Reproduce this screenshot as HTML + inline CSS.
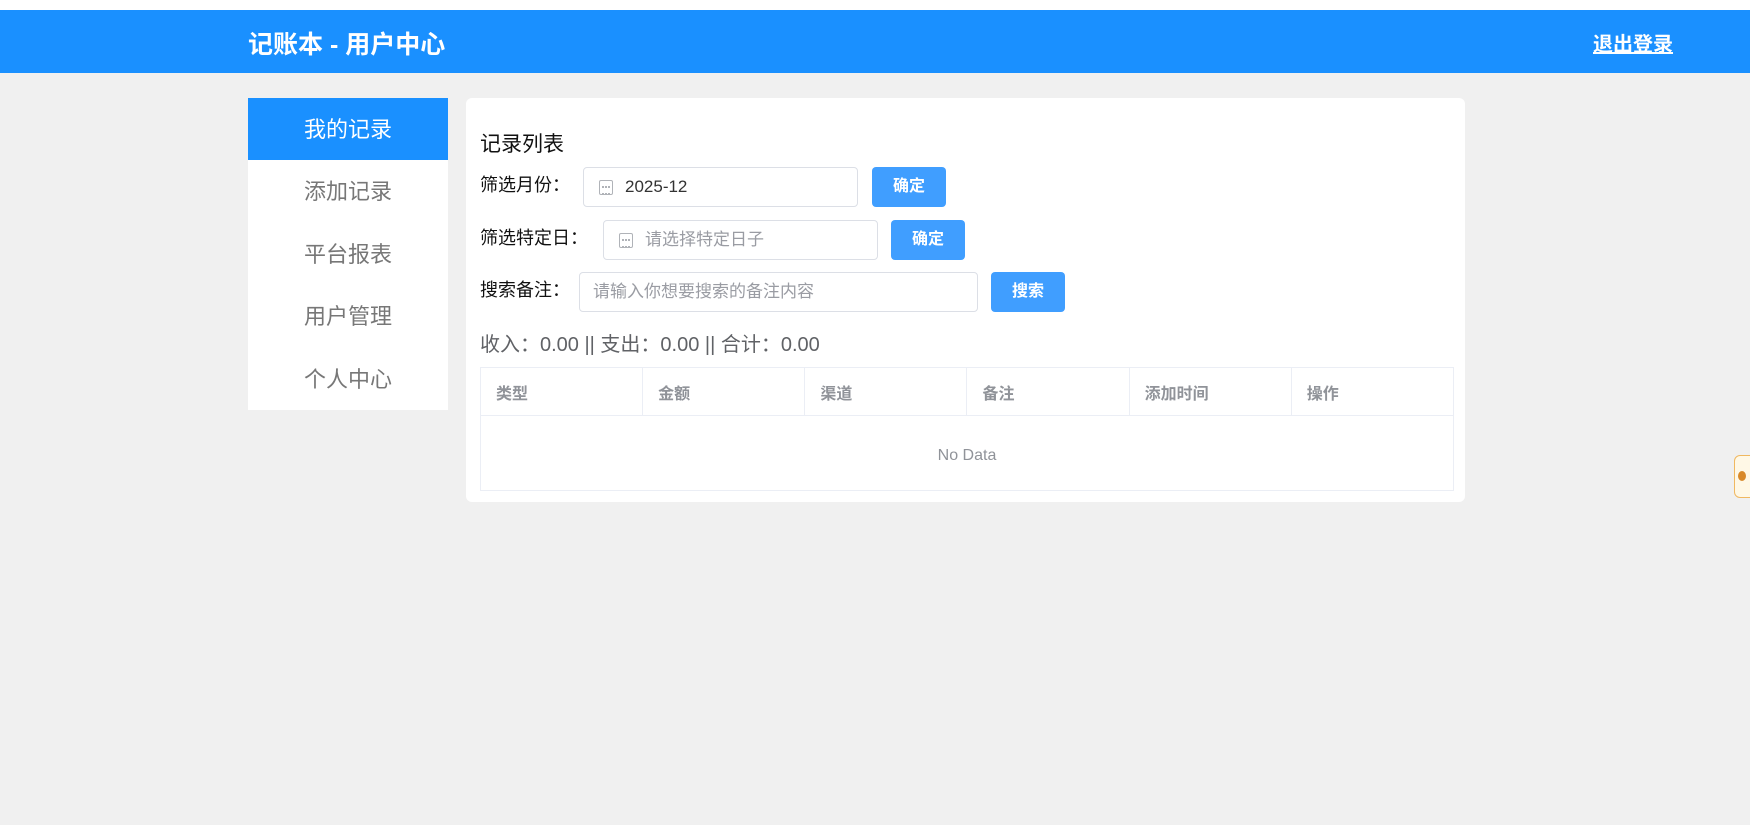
<!DOCTYPE html>
<html><head><meta charset="utf-8"><style>
*{box-sizing:border-box;margin:0;padding:0}
body{width:1750px;height:825px;background:#f0f0f0;font-family:"Liberation Sans","Noto Sans CJK SC",sans-serif;position:relative;overflow:hidden}
.top{position:absolute;left:0;top:0;width:1750px;height:10px;background:#fff}
.hdr{position:absolute;left:0;top:10px;width:1750px;height:63px;background:#1a90ff;color:#fff}
.hdr .t{position:absolute;left:248px;top:15px;font-size:25px;font-weight:bold}
.hdr .o{position:absolute;left:1593px;top:18px;font-size:20px;text-decoration:underline;font-weight:bold}
.side{position:absolute;left:248px;top:98px;width:200px;height:312px;background:#fff}
.side div{height:62.4px;line-height:64px;text-align:center;font-size:22px;color:#777}
.side div.a{background:#1a90ff;color:#fff}
.card{position:absolute;left:466px;top:98px;width:999px;height:404px;background:#fff;border-radius:6px}
.abs{position:absolute}
.lbl{font-size:18px;color:#111}
.inp{position:absolute;height:40px;border:1px solid #dcdfe6;border-radius:4px;background:#fff;font-size:17px;line-height:38px;color:#9a9ca3}
.btn{position:absolute;height:40px;width:74px;background:#409eff;border-radius:4px;color:#fff;font-weight:bold;font-size:16px;text-align:center;line-height:40px}
.cal{position:absolute;top:12px;width:14px;height:15px;border:1.5px solid #b0b3b8;border-radius:2px}
.cal:after{content:"";position:absolute;left:2px;right:2px;top:5px;height:5px;border-top:2px dotted #b0b3b8;border-bottom:2px dotted #b0b3b8}
table{position:absolute;left:480px;top:367px;width:974px;border-collapse:collapse;table-layout:fixed}
th{height:48px;border:1px solid #ebeef5;text-align:left;padding-left:15px;color:#909399;font-size:16px;font-weight:bold}
td{height:75px;border:1px solid #ebeef5;text-align:center;color:#909399;font-size:16px;padding-top:6px}
</style></head><body>
<div class="top"></div>
<div class="hdr"><div class="t">记账本 - 用户中心</div><div class="o">退出登录</div></div>
<div class="side"><div class="a">我的记录</div><div>添加记录</div><div>平台报表</div><div>用户管理</div><div>个人中心</div></div>
<div class="card"></div>
<div class="abs" style="left:480px;top:128px;font-size:21px;color:#111">记录列表</div>
<div class="abs lbl" style="left:480px;top:171px">筛选月份：</div>
<div class="inp" style="left:583px;top:167px;width:275px;color:#333"><span class="cal" style="left:15px"></span><span style="position:absolute;left:41px">2025-12</span></div>
<div class="btn" style="left:872px;top:167px">确定</div>
<div class="abs lbl" style="left:480px;top:224px">筛选特定日：</div>
<div class="inp" style="left:603px;top:220px;width:275px"><span class="cal" style="left:15px"></span><span style="position:absolute;left:41px">请选择特定日子</span></div>
<div class="btn" style="left:891px;top:220px">确定</div>
<div class="abs lbl" style="left:480px;top:276px">搜索备注：</div>
<div class="inp" style="left:579px;top:272px;width:399px"><span style="position:absolute;left:13px">请输入你想要搜索的备注内容</span></div>
<div class="btn" style="left:991px;top:272px">搜索</div>
<div class="abs" style="left:480px;top:328px;font-size:20px;color:#606266">收入：0.00 || 支出：0.00 || 合计：0.00</div>
<table><tr><th>类型</th><th>金额</th><th>渠道</th><th>备注</th><th>添加时间</th><th>操作</th></tr>
<tr><td colspan="6">No Data</td></tr></table>
<div class="abs" style="left:1734px;top:455px;width:30px;height:43px;border:1px solid #f0b860;border-radius:6px;background:#fff8e6"></div>
<div class="abs" style="left:1738px;top:471px;width:8px;height:10px;border-radius:50%;background:#d8892a"></div>
</body></html>
